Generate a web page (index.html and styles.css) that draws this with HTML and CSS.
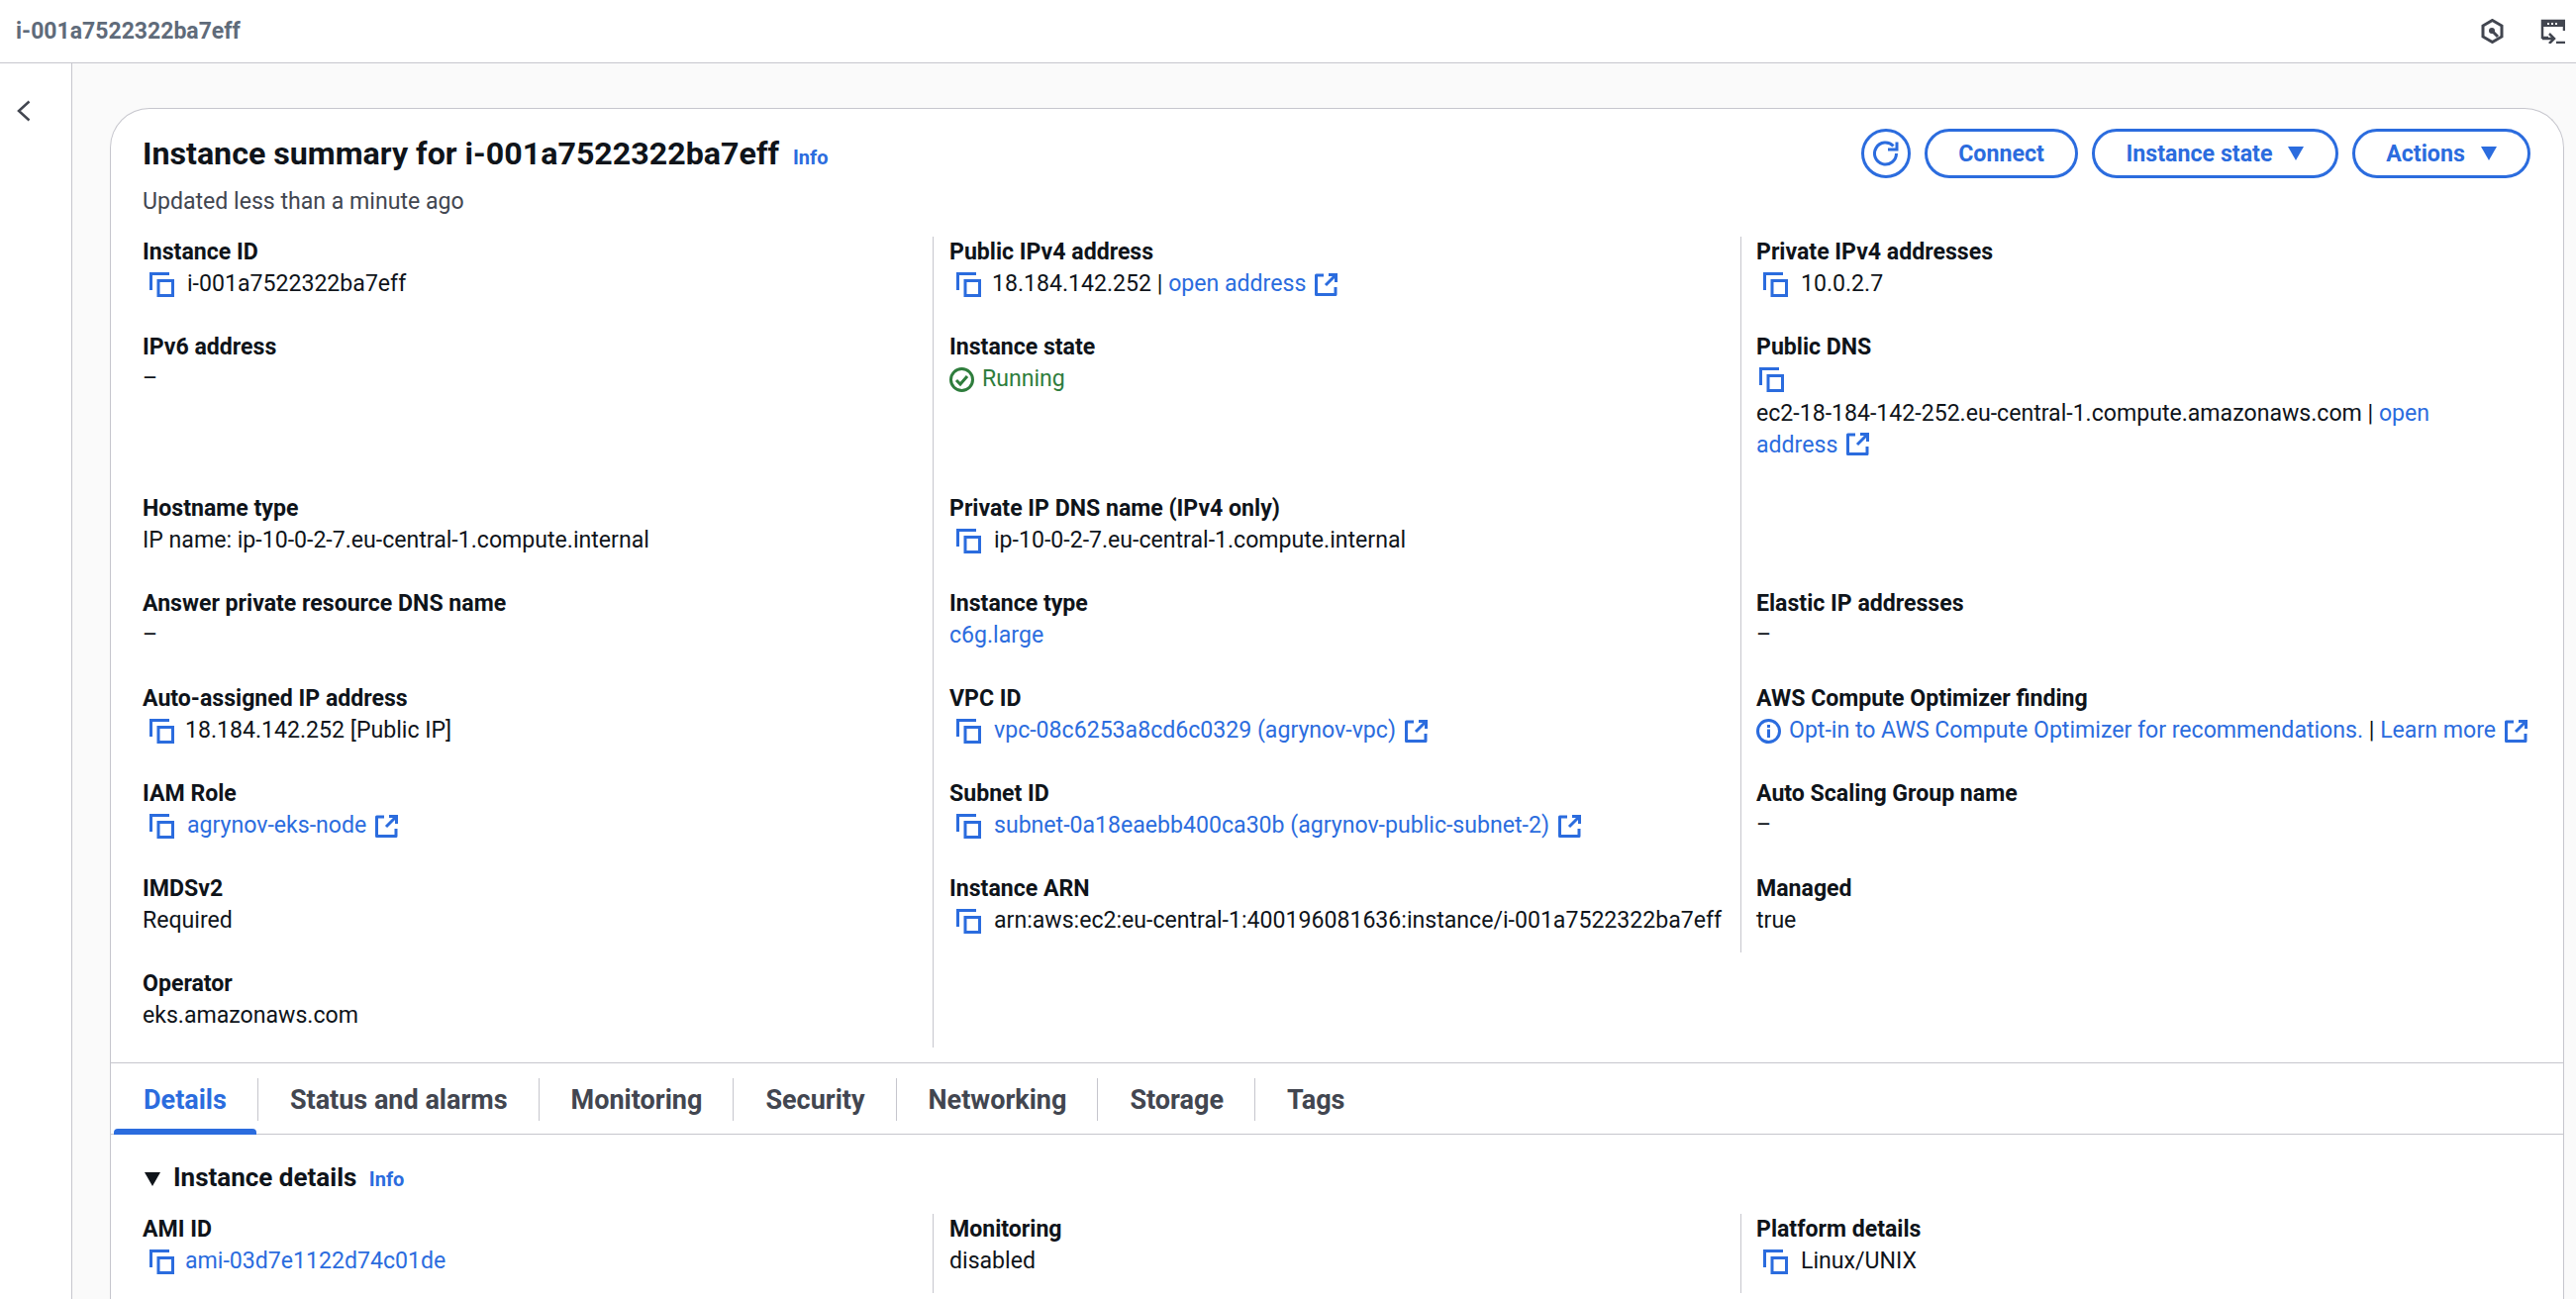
FILE: index.html
```html
<!DOCTYPE html>
<html>
	<head>
		<meta charset="utf-8" />
		<title>Instance summary</title>
		<link rel="stylesheet" href="styles.css">
	</head>
	<body>
		<!-- shared icons -->
		<svg class="defs" width="0" height="0">
			<symbol id="copy" viewBox="0 0 25 25">
				<path d="M20 1.5H1.5V18" fill="none" stroke="currentColor" stroke-width="3"/>
				<rect x="9" y="8.5" width="14.5" height="15" fill="none" stroke="currentColor" stroke-width="3"/>
			</symbol>
			<symbol id="ext" viewBox="0 0 23 23">
				<path d="M9 2H1.5V21.5H21V14" fill="none" stroke="currentColor" stroke-width="3" stroke-linejoin="round"/>
				<path d="M14 1.5H21.5V9M21 2L11 12" fill="none" stroke="currentColor" stroke-width="3"/>
			</symbol>
		</svg>

		<header class="topbar">
			<span class="topbar-title">i-001a7522322ba7eff</span>
			<div class="topbar-icons">
				<svg class="top-icon" viewBox="0 0 25 25">
					<path d="M12.5 1.5L22 7V18L12.5 23.5L3 18V7Z" fill="none" stroke="#424650" stroke-width="3"/>
					<path d="M12 12L18 18" fill="none" stroke="#424650" stroke-width="3"/>
					<circle cx="12" cy="12" r="3" fill="#424650"/>
				</svg>
				<svg class="top-icon" viewBox="0 0 25 25">
					<path d="M8 19H2V2H24V12" fill="none" stroke="#424650" stroke-width="2.5"/>
					<rect x="1" y="1" width="24" height="7" fill="#424650"/>
					<path d="M7 4h2v2H7zM11 4h2v2h-2zM15 4h2v2h-2z" fill="#fff"/>
					<path d="M2 20H13M9 15L14 20L9 25" fill="none" stroke="#424650" stroke-width="2.5"/>
					<path d="M16 24H25" fill="none" stroke="#424650" stroke-width="2.5"/>
				</svg>
			</div>
		</header>

		<div class="main">
			<aside class="side">
				<svg class="back" viewBox="0 0 14 22"><path d="M12.5 1.5L2 11L12.5 20.5" fill="none" stroke="#424650" stroke-width="2.5"/></svg>
			</aside>

			<div class="content">
				<div class="card">
					<div class="card-head">
						<div>
							<h1>Instance summary for i-001a7522322ba7eff <a class="info">Info</a></h1>
						</div>
						<div class="actions">
							<button class="btn btn-icon">
								<svg viewBox="0 0 26 26" width="26" height="26">
									<path d="M20.5 5.5A11 11 0 1 0 23.5 13" fill="none" stroke="currentColor" stroke-width="3"/>
									<path d="M15 9H24V1.5" fill="none" stroke="currentColor" stroke-width="3"/>
								</svg>
							</button>
							<button class="btn btn-connect">Connect</button>
							<button class="btn btn-state">Instance state <i class="caret"></i></button>
							<button class="btn btn-actions">Actions <i class="caret"></i></button>
						</div>
					</div>
					<div class="updated">Updated less than a minute ago</div>

					<div class="summary">
						<div class="col">
							<div class="field">
								<div class="label">Instance ID</div>
								<div class="value"><svg class="copy"><use href="#copy"/></svg>i-001a7522322ba7eff</div>
							</div>
							<div class="field field-tall">
								<div class="label">IPv6 address</div>
								<div class="value">–</div>
							</div>
							<div class="field">
								<div class="label">Hostname type</div>
								<div class="value">IP name: ip-10-0-2-7.eu-central-1.compute.internal</div>
							</div>
							<div class="field">
								<div class="label">Answer private resource DNS name</div>
								<div class="value">–</div>
							</div>
							<div class="field">
								<div class="label">Auto-assigned IP address</div>
								<div class="value"><svg class="copy copy-tight"><use href="#copy"/></svg>18.184.142.252 [Public IP]</div>
							</div>
							<div class="field">
								<div class="label">IAM Role</div>
								<div class="value"><svg class="copy"><use href="#copy"/></svg><a>agrynov-eks-node</a><svg class="ext"><use href="#ext"/></svg></div>
							</div>
							<div class="field">
								<div class="label">IMDSv2</div>
								<div class="value">Required</div>
							</div>
							<div class="field">
								<div class="label">Operator</div>
								<div class="value">eks.amazonaws.com</div>
							</div>
						</div>

						<div class="col col-rule col-mid">
							<div class="field">
								<div class="label">Public IPv4 address</div>
								<div class="value"><svg class="copy copy-tight"><use href="#copy"/></svg>18.184.142.252 |&nbsp;<a>open address</a><svg class="ext"><use href="#ext"/></svg></div>
							</div>
							<div class="field field-tall">
								<div class="label">Instance state</div>
								<div class="value running">
									<svg class="ok" viewBox="0 0 25 25">
										<circle cx="12.5" cy="12.5" r="11" fill="none" stroke="currentColor" stroke-width="3"/>
										<path d="M7 13L11 17L18 9" fill="none" stroke="currentColor" stroke-width="3"/>
									</svg>Running
								</div>
							</div>
							<div class="field">
								<div class="label">Private IP DNS name (IPv4 only)</div>
								<div class="value"><svg class="copy"><use href="#copy"/></svg>ip-10-0-2-7.eu-central-1.compute.internal</div>
							</div>
							<div class="field">
								<div class="label">Instance type</div>
								<div class="value"><a>c6g.large</a></div>
							</div>
							<div class="field">
								<div class="label">VPC ID</div>
								<div class="value"><svg class="copy"><use href="#copy"/></svg><a>vpc-08c6253a8cd6c0329 (agrynov-vpc)</a><svg class="ext"><use href="#ext"/></svg></div>
							</div>
							<div class="field">
								<div class="label">Subnet ID</div>
								<div class="value"><svg class="copy"><use href="#copy"/></svg><a>subnet-0a18eaebb400ca30b (agrynov-public-subnet-2)</a><svg class="ext"><use href="#ext"/></svg></div>
							</div>
							<div class="field">
								<div class="label">Instance ARN</div>
								<div class="value"><svg class="copy"><use href="#copy"/></svg>arn:aws:ec2:eu-central-1:400196081636:instance/i-001a7522322ba7eff</div>
							</div>
						</div>

						<div class="col col-rule col-last">
							<div class="field">
								<div class="label">Private IPv4 addresses</div>
								<div class="value"><svg class="copy"><use href="#copy"/></svg>10.0.2.7</div>
							</div>
							<div class="field field-tall">
								<div class="label">Public DNS</div>
								<div class="value"><svg class="copy copy-solo"><use href="#copy"/></svg></div>
								<div class="dns">ec2-18-184-142-252.eu-central-1.compute.amazonaws.com | <a>open</a><br><a>address</a><svg class="ext"><use href="#ext"/></svg></div>
							</div>
							<div class="field"></div>
							<div class="field">
								<div class="label">Elastic IP addresses</div>
								<div class="value">–</div>
							</div>
							<div class="field">
								<div class="label">AWS Compute Optimizer finding</div>
								<div class="value">
									<svg class="ok info-icon" viewBox="0 0 25 25">
										<circle cx="12.5" cy="12.5" r="11" fill="none" stroke="currentColor" stroke-width="3"/>
										<path d="M12.5 10.5V19M12.5 6V9" fill="none" stroke="currentColor" stroke-width="3"/>
									</svg><a>Opt-in to AWS Compute Optimizer for recommendations.</a>&nbsp;|&nbsp;<a>Learn more</a><svg class="ext"><use href="#ext"/></svg>
								</div>
							</div>
							<div class="field">
								<div class="label">Auto Scaling Group name</div>
								<div class="value">–</div>
							</div>
							<div class="field">
								<div class="label">Managed</div>
								<div class="value">true</div>
							</div>
						</div>
					</div>

					<nav class="tabs">
						<a class="tab active"><span>Details</span></a>
						<a class="tab"><span>Status and alarms</span></a>
						<a class="tab"><span>Monitoring</span></a>
						<a class="tab"><span>Security</span></a>
						<a class="tab"><span>Networking</span></a>
						<a class="tab"><span>Storage</span></a>
						<a class="tab"><span>Tags</span></a>
					</nav>

					<div class="details">
						<h2><i class="caret caret-dark"></i>Instance details <a class="info">Info</a></h2>
						<div class="summary">
							<div class="col">
								<div class="field">
									<div class="label">AMI ID</div>
									<div class="value"><svg class="copy copy-tight"><use href="#copy"/></svg><a>ami-03d7e1122d74c01de</a></div>
								</div>
							</div>
							<div class="col col-rule">
								<div class="field">
									<div class="label">Monitoring</div>
									<div class="value">disabled</div>
								</div>
							</div>
							<div class="col col-rule col-last">
								<div class="field">
									<div class="label">Platform details</div>
									<div class="value"><svg class="copy"><use href="#copy"/></svg>Linux/UNIX</div>
								</div>
							</div>
						</div>
					</div>
				</div>
			</div>
		</div>
	</body>
</html>
```

FILE: styles.css
```css
* {
    box-sizing: border-box;
}

html, body {
    height: 100%;
}

body {
    margin: 0;
    overflow: hidden;
    font-family: Roboto, "Noto Sans", sans-serif;
    font-size: 23.1px;
    line-height: 32px;
    color: #0f141a;
    background-color: #fff;
}

a {
    color: #2b6cde;
}

.defs {
    position: absolute;
}

.topbar {
    height: 64px;
    padding: 0 11px 0 16px;
    display: flex;
    align-items: center;
    justify-content: space-between;
    border-bottom: 1px solid #c6c6cd;
}

.topbar-title {
    font-size: 23px;
    font-weight: 700;
    color: #5f6b7a;
}

.topbar-icons {
    display: flex;
    gap: 36px;
}

.top-icon {
    width: 25px;
    height: 25px;
    display: block;
}

.main {
    display: flex;
    height: calc(100% - 64px);
}

.side {
    width: 73px;
    flex: none;
    border-right: 1px solid #c6c6cd;
    padding: 37px 0 0 17px;
}

.back {
    width: 14px;
    height: 22px;
    display: block;
}

.content {
    flex: 1;
    padding: 45px 12px 0 38px;
    background-color: #fafafa;
    overflow: hidden;
}

.card {
    height: 100%;
    padding-top: 20px;
    background-color: #fff;
    border: 1px solid #c6c6cd;
    border-bottom: 0;
    border-radius: 40px 40px 0 0;
}

.card-head {
    display: flex;
    justify-content: space-between;
    align-items: center;
    height: 50px;
    padding: 0 33px 0 32px;
}

h1 {
    margin: 3px 0 0;
    font-size: 32.2px;
    line-height: 40px;
    font-weight: 700;
}

.info {
    font-size: 20px;
    font-weight: 700;
    margin-left: 6px;
}

.actions {
    display: flex;
    gap: 14px;
}

.btn {
    height: 50px;
    padding: 0;
    display: flex;
    align-items: center;
    justify-content: center;
    font-family: inherit;
    font-size: 23.2px;
    font-weight: 700;
    color: #2b6cde;
    background-color: #fff;
    border: 3px solid #2b6cde;
    border-radius: 25px;
}

.btn-icon {
    width: 50px;
}

.btn-connect {
    width: 155px;
}

.btn-state {
    width: 249px;
}

.btn-actions {
    width: 180px;
}

.caret {
    display: inline-block;
    width: 0;
    height: 0;
    margin-left: 16px;
    border-left: 8.5px solid transparent;
    border-right: 8.5px solid transparent;
    border-top: 14px solid #2b6cde;
}

.caret-dark {
    margin: 0 13px 0 2px;
    border-top-color: #0f141a;
}

.updated {
    margin-top: 8px;
    padding-left: 32px;
    color: #424650;
}

.summary {
    display: grid;
    grid-template-columns: 798px 816px 1fr;
    margin-top: 19px;
    padding-left: 32px;
    align-items: start;
}

.col {
    display: flex;
    flex-direction: column;
    gap: 32px;
    padding-bottom: 16px;
}

.col-rule {
    padding-left: 16px;
    border-left: 1px solid #c6c6cd;
}

.col-mid {
    align-self: stretch;
}

.col-last {
    padding-left: 15px;
}

.field {
    min-height: 64px;
}

.field-tall {
    min-height: 131px;
    max-height: 131px;
}

.label {
    font-weight: 700;
}

.value {
    display: flex;
    align-items: center;
    min-height: 32px;
    white-space: nowrap;
}

.copy {
    width: 25px;
    height: 25px;
    margin: 0 13px 0 7px;
    color: #2b6cde;
    flex: none;
}

.copy-tight {
    margin-right: 11px;
}

.copy-solo {
    margin-left: 3px;
}

.ext {
    display: inline-block;
    width: 23px;
    height: 23px;
    margin-left: 9px;
    color: #2b6cde;
    vertical-align: -3px;
    flex: none;
}

.ok {
    width: 25px;
    height: 25px;
    margin-right: 8px;
    flex: none;
}

.running {
    color: #2e7d3c;
}

.info-icon {
    color: #2b6cde;
}

.dns {
    margin-top: 3px;
}

.tabs {
    display: flex;
    height: 73px;
    margin-top: 15px;
    padding: 15px 0 0 1px;
    border-top: 1px solid #c6c6cd;
    border-bottom: 1px solid #c6c6cd;
}

.tab {
    position: relative;
    height: 43px;
    padding: 0 31px 0 32px;
    display: flex;
    align-items: center;
    font-size: 27px;
    font-weight: 700;
    color: #424650;
    border-right: 1px solid #c6c6cd;
}

.tab:last-child {
    border-right: 0;
}

.tab.active {
    color: #2b6cde;
}

.tab.active::after {
    content: "";
    position: absolute;
    left: 2px;
    right: 1px;
    top: 51px;
    height: 6px;
    background-color: #2b6cde;
    border-radius: 4px 4px 0 0;
}

.details {
    padding-top: 27px;
}

h2 {
    margin: 0;
    padding-left: 32px;
    font-size: 26px;
    line-height: 32px;
    font-weight: 700;
}
```
